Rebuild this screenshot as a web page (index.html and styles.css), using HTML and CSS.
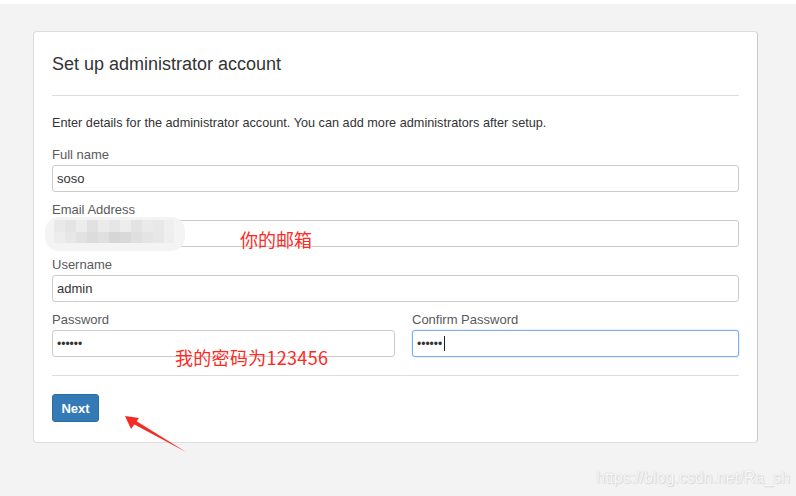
FILE: index.html
```html
<!DOCTYPE html>
<html lang="en">
  <head>
    <meta charset="UTF-8" />
    <title>Set up administrator account</title>
    <link rel="stylesheet" href="styles.css">
  </head>
  <body>
    <div class="card">
      <div class="card-header">
        <h1>Set up administrator account</h1>
      </div>
      <div class="card-body">
        <p class="intro">Enter details for the administrator account. You can add more administrators after setup.</p>

        <div class="form-group">
          <label>Full name</label>
          <input class="form-control" type="text" value="soso">
        </div>
        <div class="form-group">
          <label>Email Address</label>
          <input class="form-control" type="text" value="">
        </div>
        <div class="form-group">
          <label>Username</label>
          <input class="form-control" type="text" value="admin">
        </div>
        <div class="form-row">
          <div class="form-group">
            <label>Password</label>
            <input class="form-control pwd" type="password" value="123456">
          </div>
          <div class="form-group">
            <label>Confirm Password</label>
            <div class="caret-wrap">
              <input class="form-control pwd focus" type="password" value="123456">
              <span class="caret"></span>
            </div>
          </div>
        </div>
      </div>
      <div class="card-footer">
        <button class="btn-primary">Next</button>
      </div>
    </div>

    <!-- mosaic over the email value -->
    <svg class="mosaic" width="140" height="34" viewBox="0 0 140 34">
      <defs>
        <filter id="soft"><feGaussianBlur stdDeviation="0.6" /></filter>
      </defs>
      <g filter="url(#soft)">
        <rect x="0" y="0" width="140" height="34" rx="14" fill="#f4f4f4" />
        <rect x="9" y="3" width="11" height="12" fill="#e9e9e9" />
        <rect x="20" y="3" width="11" height="12" fill="#e4e4e4" />
        <rect x="31" y="3" width="11" height="12" fill="#ececec" />
        <rect x="42" y="3" width="11" height="12" fill="#e1e1e1" />
        <rect x="53" y="3" width="11" height="12" fill="#ebebeb" />
        <rect x="64" y="3" width="11" height="12" fill="#e6e6e6" />
        <rect x="75" y="3" width="11" height="12" fill="#ededed" />
        <rect x="86" y="3" width="11" height="12" fill="#e3e3e3" />
        <rect x="97" y="3" width="11" height="12" fill="#eaeaea" />
        <rect x="108" y="3" width="11" height="12" fill="#e8e8e8" />
        <rect x="119" y="3" width="10" height="12" fill="#efefef" />
        <rect x="9" y="15" width="11" height="11" fill="#ededed" />
        <rect x="20" y="15" width="11" height="11" fill="#e7e7e7" />
        <rect x="31" y="15" width="11" height="11" fill="#e2e2e2" />
        <rect x="42" y="15" width="11" height="11" fill="#dcdcdc" />
        <rect x="53" y="15" width="11" height="11" fill="#e0e0e0" />
        <rect x="64" y="15" width="11" height="11" fill="#d6d6d6" />
        <rect x="75" y="15" width="11" height="11" fill="#d9d9d9" />
        <rect x="86" y="15" width="11" height="11" fill="#dfdfdf" />
        <rect x="97" y="15" width="11" height="11" fill="#e4e4e4" />
        <rect x="108" y="15" width="11" height="11" fill="#e7e7e7" />
        <rect x="119" y="15" width="10" height="11" fill="#eeeeee" />
      </g>
    </svg>

    <span class="note note-email">你的邮箱</span>
    <span class="note note-pwd">我的密码为123456</span>

    <svg class="arrow" width="80" height="50" viewBox="0 0 80 50">
      <polygon points="15,10.3 66,42 13,13.7" fill="#f52a22" />
      <polygon points="5,6 19,8 11,19" fill="#f52a22" />
    </svg>

    <span class="watermark">https://blog.csdn.net/Ra_sh</span>
  </body>
</html>
```

FILE: styles.css
```css
body {
  margin: 0;
  height: 492px;
  border-top: 4px solid #fff;
  background-color: #f3f3f3;
  font-family: "Liberation Sans", Arial, Helvetica, sans-serif;
  color: #333;
  overflow: hidden;
}

.card {
  box-sizing: border-box;
  width: 725px;
  margin: 27px 0 0 33px;
  padding: 0 18px;
  background-color: #fff;
  border: 1px solid #ddd;
  border-right-color: #c8c8c8;
  border-radius: 4px;
}

.card-header {
  padding: 22px 0 21px;
  border-bottom: 1px solid #ddd;
}

h1 {
  margin: 0;
  font-size: 18px;
  line-height: 20px;
  font-weight: normal;
  color: #333;
}

.card-body {
  padding-top: 18px;
  padding-bottom: 18px;
  border-bottom: 1px solid #ddd;
}

.intro {
  margin: 0 0 14px;
  font-size: 12.7px;
  line-height: 18px;
}

.form-group {
  margin-bottom: 9px;
}

.form-group label {
  display: block;
  margin-bottom: 1px;
  font-size: 13px;
  line-height: 18px;
  color: #5a5a5a;
}

.form-control {
  display: block;
  box-sizing: border-box;
  width: 100%;
  height: 27px;
  padding: 0 4px;
  border: 1px solid #ccc;
  border-radius: 3px;
  font-family: "Liberation Sans", Arial, sans-serif;
  font-size: 13px;
  color: #333;
  outline: none;
}

.form-control.focus {
  border-color: #7eaee8;
  box-shadow: 0 0 2px rgba(102, 175, 233, 0.6);
}

.pwd {
  font-size: 12px;
  letter-spacing: 0;
}

.form-row {
  display: grid;
  grid-template-columns: 343px 1fr;
  column-gap: 17px;
}

.form-row .form-group {
  margin-bottom: 0;
}

.caret-wrap {
  position: relative;
}

.caret {
  position: absolute;
  left: 32px;
  top: 6px;
  width: 1px;
  height: 15px;
  background-color: #222;
}

.card-footer {
  padding: 18px 0 20px;
}

.btn-primary {
  display: block;
  width: 47px;
  height: 28px;
  padding: 0;
  border: 1px solid #2e6da4;
  border-radius: 3px;
  background-color: #337ab7;
  color: #fff;
  font-family: "Liberation Sans", Arial, sans-serif;
  font-size: 13px;
  font-weight: bold;
}

.mosaic {
  position: absolute;
  left: 45px;
  top: 217px;
}

.note {
  position: absolute;
  color: #ff2a1f;
  font-family: "Noto Sans CJK SC", sans-serif;
  font-size: 18px;
  line-height: 20px;
}

.note-email {
  left: 240px;
  top: 229px;
}

.note-pwd {
  left: 175px;
  top: 347px;
  letter-spacing: 0.3px;
}

.arrow {
  position: absolute;
  left: 120px;
  top: 410px;
}

.watermark {
  position: absolute;
  left: 596px;
  top: 469px;
  font-size: 16px;
  color: #f8f8f8;
  text-shadow: 0 0 1px #c4c4c4, 1px 1px 1px #dcdcdc;
}
```
